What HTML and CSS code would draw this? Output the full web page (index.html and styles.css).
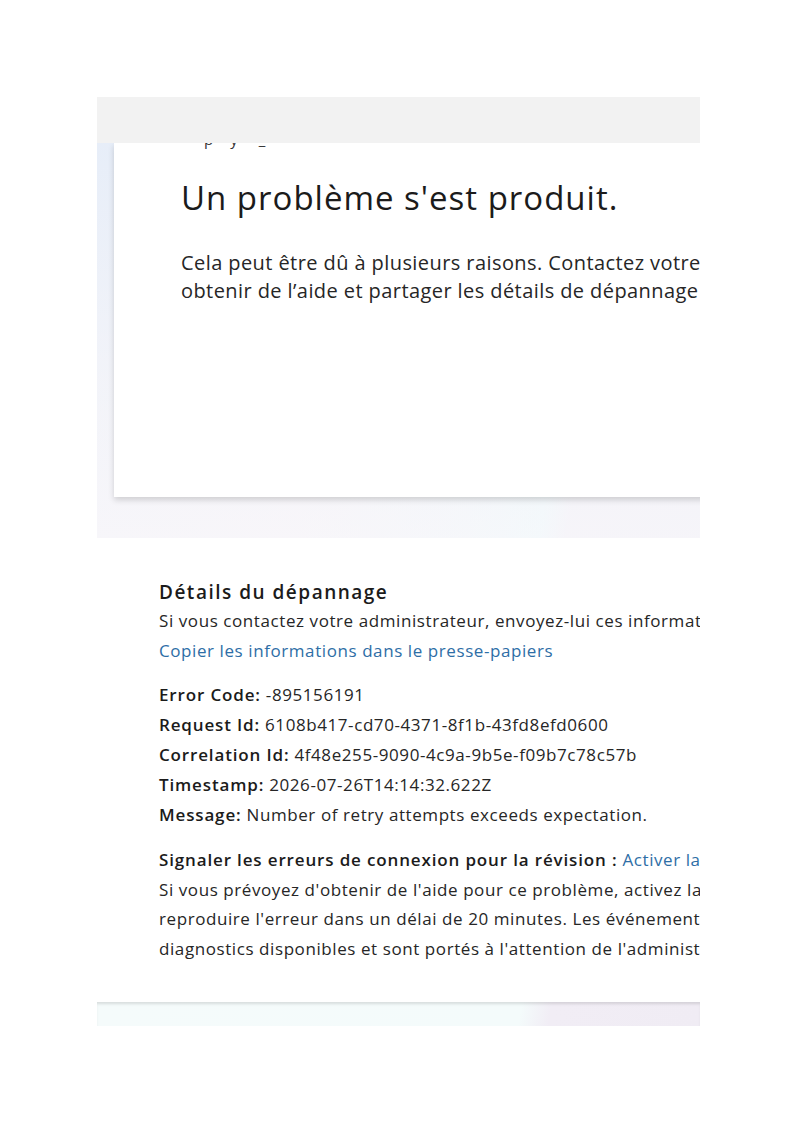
FILE: index.html
```html
<!DOCTYPE html>
<html lang="fr">
<head>
<meta charset="utf-8">
<title>Un problème s'est produit.</title>
<link rel="stylesheet" href="styles.css">
</head>
<body>
<div class="frame">
  <div class="topbar"></div>
  <div class="hero">
    <div class="card">
      <div class="clipped">p<span class="gap1">y</span><span class="gap2">_</span></div>
      <h1 class="title">Un problème s'est produit.</h1>
      <p class="lead">Cela peut être dû à plusieurs raisons. Contactez votre administrateur pour<br>obtenir de l’aide et partager les détails de dépannage ci-dessous.</p>
    </div>
  </div>
  <div class="details">
    <h2 class="details-title">Détails du dépannage</h2>
    <div class="line">Si vous contactez votre administrateur, envoyez-lui ces informations.</div>
    <div class="line"><a class="link" href="#">Copier les informations dans le presse-papiers</a></div>
    <div class="info">
      <div class="line"><b>Error Code:</b> -895156191</div>
      <div class="line"><b>Request Id:</b> 6108b417-cd70-4371-8f1b-43fd8efd0600</div>
      <div class="line"><b>Correlation Id:</b> 4f48e255-9090-4c9a-9b5e-f09b7c78c57b</div>
      <div class="line"><b>Timestamp:</b> 2026-07-26T14:14:32.622Z</div>
      <div class="line"><b>Message:</b> Number of retry attempts exceeds expectation.</div>
    </div>
    <div class="report">
      <div class="line"><b>Signaler les erreurs de connexion pour la révision :</b> <a class="link" href="#">Activer la journalisation</a></div>
      <div class="line">Si vous prévoyez d'obtenir de l'aide pour ce problème, activez la journalisation et essayez de</div>
      <div class="line">reproduire l'erreur dans un délai de 20 minutes. Les événements journalisés seront</div>
      <div class="line">diagnostics disponibles et sont portés à l'attention de l'administrateur.</div>
    </div>
  </div>
  <div class="footer-band"></div>
</div>
</body>
</html>
```
FILE: styles.css
```css
html, body {
  margin: 0;
  padding: 0;
  background: #ffffff;
}
body {
  font-family: "Open Sans", "Noto Sans", sans-serif;
  color: #242424;
}
.frame {
  margin: 97px 0 0 97px;
  width: 603px;
  height: 929px;
  overflow: hidden;
  display: flex;
  flex-direction: column;
}
.topbar {
  height: 46px;
  flex: none;
  background: #f2f2f2;
}
.hero {
  flex: none;
  height: 395px;
  padding-left: 17px;
  background:
    linear-gradient(180deg, rgba(230,237,248,0.95) 0%, rgba(238,241,248,0.5) 60%, rgba(247,246,250,0.6) 100%),
    linear-gradient(100deg, #f6f6fa 0%, #f9f6f9 40%, #f4f9fb 65%, #f0fcfd 76%, #f5f3f8 80%, #f4f3f8 100%);
  overflow: hidden;
}
.card {
  display: flow-root;
  background: #ffffff;
  height: 354px;
  width: 700px;
  box-shadow: 0 3px 6px rgba(0,0,0,0.16);
  overflow: hidden;
  padding-left: 67px;
  box-sizing: border-box;
}
.clipped {
  font-size: 15px;
  line-height: 20px;
  height: 20px;
  margin-top: -14px;
  padding-left: 23px;
  color: #333;
  white-space: nowrap;
}
.gap1 { margin-left: 17px; }
.gap2 { margin-left: 21px; }
.title {
  margin: 29px 0 0 0;
  font-size: 33px;
  font-weight: 400;
  letter-spacing: 1px;
  line-height: 40px;
  color: #1b1b1b;
  white-space: nowrap;
}
.lead {
  margin: 31px 0 0 0;
  font-size: 20px;
  letter-spacing: 0.42px;
  line-height: 28px;
  color: #262626;
  white-space: nowrap;
}
.details {
  flex: none;
  height: 464px;
  padding: 40px 0 0 62px;
  box-sizing: border-box;
  white-space: nowrap;
  font-size: 17px;
  letter-spacing: 0.58px;
  color: #262626;
}
.details-title {
  margin: 0;
  font-size: 19px;
  font-weight: 600;
  letter-spacing: 1.5px;
  line-height: 28px;
  color: #1b1b1b;
}
.line {
  line-height: 30px;
}
.link {
  color: #2e6ea6;
  text-decoration: none;
}
.info {
  margin-top: 14px;
}
b {
  font-weight: 600;
  letter-spacing: 0.85px;
  color: #1b1b1b;
}
.report {
  margin-top: 15px;
}
.report .line {
  line-height: 29.5px;
}
.footer-band {
  flex: none;
  height: 24px;
  background: linear-gradient(100deg, #f5fbfb 0%, #f4fbfb 70%, #f1edf5 75%, #f0ecf4 100%);
  box-shadow: inset 0 3px 3px -1px rgba(0,0,0,0.12);
}
```
